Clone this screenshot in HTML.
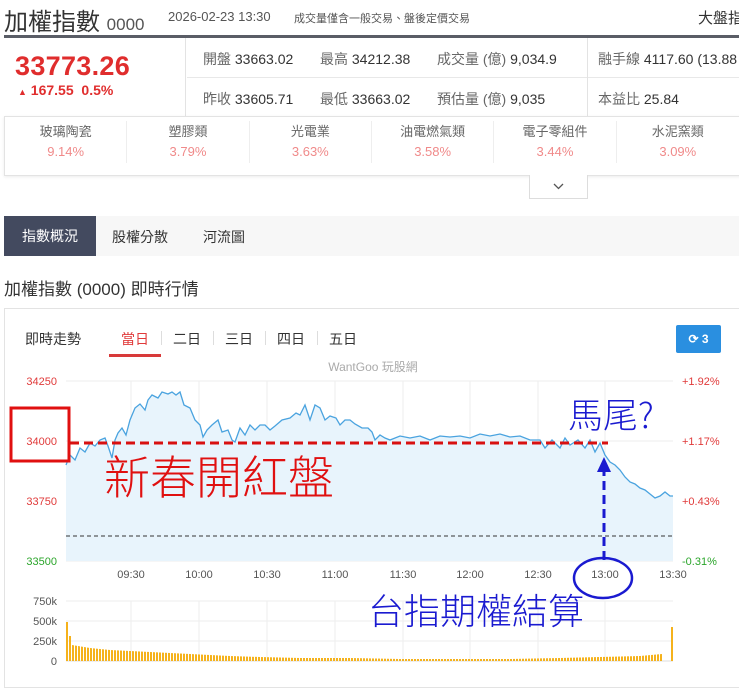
<!DOCTYPE html>
<html><head><meta charset="utf-8"><style>
*{margin:0;padding:0;box-sizing:border-box}
body{width:739px;height:674px;overflow:hidden;background:#fff;font-family:"Liberation Sans","Noto Sans CJK TC",sans-serif;color:#333;position:relative}
.a{position:absolute;white-space:nowrap}
.g{color:#666}
</style></head><body>
<div class="a" style="left:4px;top:2px;font-size:24px;color:#333">加權指數 <span style="font-size:17px;color:#555">0000</span></div>
<div class="a" style="left:168px;top:9px;font-size:13px;color:#555">2026-02-23 13:30</div>
<div class="a" style="left:294px;top:10px;font-size:11px;color:#555">成交量僅含一般交易、盤後定價交易</div>
<div class="a" style="left:698px;top:7px;font-size:15px;color:#333">大盤指</div>
<div class="a" style="left:4px;top:35px;width:735px;height:3px;background:#5a5d66"></div>
<div class="a" style="left:4px;top:38px;width:182px;height:78px;background:#fff;border-right:1px solid #e3e3e3"></div>
<div class="a" style="left:15px;top:51px;font-size:27px;font-weight:bold;color:#e02d2d;letter-spacing:0.3px">33773.26</div>
<div class="a" style="left:18px;top:82px;font-size:14px;color:#e02d2d;font-weight:bold"><span style="font-size:9px">▲</span> 167.55 &nbsp;0.5%</div>
<div class="a" style="left:187px;top:77px;width:552px;height:1px;background:#e8e8e8"></div>
<div class="a" style="left:587px;top:38px;width:1px;height:78px;background:#e3e3e3"></div>
<div class="a" style="left:203px;top:49px;font-size:14px"><span class="g">開盤</span> 33663.02</div>
<div class="a" style="left:320px;top:49px;font-size:14px"><span class="g">最高</span> 34212.38</div>
<div class="a" style="left:437px;top:49px;font-size:14px"><span class="g">成交量 (億)</span> 9,034.9</div>
<div class="a" style="left:598px;top:49px;font-size:14px"><span class="g">融手線</span> 4117.60 (13.88</div>
<div class="a" style="left:203px;top:89px;font-size:14px"><span class="g">昨收</span> 33605.71</div>
<div class="a" style="left:320px;top:89px;font-size:14px"><span class="g">最低</span> 33663.02</div>
<div class="a" style="left:437px;top:89px;font-size:14px"><span class="g">預估量 (億)</span> 9,035</div>
<div class="a" style="left:598px;top:89px;font-size:14px"><span class="g">本益比</span> 25.84</div>
<div class="a" style="left:4px;top:116px;width:740px;height:60px;border:1px solid #e3e3e3;box-shadow:0 1px 3px rgba(0,0,0,.08)"></div>
<div class="a" style="left:5px;top:121px;width:734px;display:flex;font-size:13px;text-align:center">
<div style="width:123px;border-right:1px solid #eee;height:42px"><div class="g">玻璃陶瓷</div><div style="color:#f08a8a;margin-top:4px">9.14%</div></div>
<div style="width:123px;border-right:1px solid #eee"><div class="g">塑膠類</div><div style="color:#f08a8a;margin-top:4px">3.79%</div></div>
<div style="width:123px;border-right:1px solid #eee"><div class="g">光電業</div><div style="color:#f08a8a;margin-top:4px">3.63%</div></div>
<div style="width:123px;border-right:1px solid #eee"><div class="g">油電燃氣類</div><div style="color:#f08a8a;margin-top:4px">3.58%</div></div>
<div style="width:123px;border-right:1px solid #eee"><div class="g">電子零組件</div><div style="color:#f08a8a;margin-top:4px">3.44%</div></div>
<div style="width:123px"><div class="g">水泥窯類</div><div style="color:#f08a8a;margin-top:4px">3.09%</div></div>
</div>
<div class="a" style="left:529px;top:175px;width:59px;height:24px;border:1px solid #ddd;border-top:none;background:#fff"><svg width="57" height="23"><path d="M24 9 L28.5 13.5 L33 9" fill="none" stroke="#555" stroke-width="1.3"/></svg></div>
<div class="a" style="left:4px;top:216px;width:735px;height:40px;background:#f7f7f7"></div>
<div class="a" style="left:4px;top:216px;width:92px;height:40px;background:#434a5f;color:#fff;font-size:14px;line-height:40px;text-align:center">指數概況</div>
<div class="a" style="left:112px;top:227px;font-size:14px">股權分散</div>
<div class="a" style="left:203px;top:227px;font-size:14px">河流圖</div>
<div class="a" style="left:4px;top:275px;font-size:17px;color:#333">加權指數 (0000) 即時行情</div>
<div class="a" style="left:4px;top:308px;width:740px;height:380px;border:1px solid #e3e3e3"></div>
<div class="a" style="left:25px;top:329px;font-size:14px">即時走勢</div>
<div class="a" style="left:121px;top:329px;font-size:14px;color:#e03a3a">當日</div>
<div class="a" style="left:109px;top:354px;width:52px;height:3px;background:#d83a3a"></div>
<div class="a" style="left:173px;top:329px;font-size:14px">二日</div>
<div class="a" style="left:225px;top:329px;font-size:14px">三日</div>
<div class="a" style="left:277px;top:329px;font-size:14px">四日</div>
<div class="a" style="left:329px;top:329px;font-size:14px">五日</div>
<div class="a" style="left:161px;top:331px;width:1px;height:14px;background:#ddd"></div>
<div class="a" style="left:213px;top:331px;width:1px;height:14px;background:#ddd"></div>
<div class="a" style="left:265px;top:331px;width:1px;height:14px;background:#ddd"></div>
<div class="a" style="left:317px;top:331px;width:1px;height:14px;background:#ddd"></div>
<div class="a" style="left:676px;top:325px;width:45px;height:28px;background:#2a8fe0;border-radius:2px;color:#fff;font-size:12px;font-weight:bold;line-height:28px;text-align:center">⟳ 3</div>
<svg class="a" style="left:0;top:355px" width="739" height="319" viewBox="0 355 739 319">
<defs><pattern id="st" width="3" height="10" patternUnits="userSpaceOnUse"><rect width="2" height="10" fill="#f5b21c"/></pattern></defs>
<text x="373" y="371" font-size="12" fill="#aaa" text-anchor="middle" font-family="Liberation Sans,Noto Sans CJK TC,sans-serif">WantGoo 玩股網</text>
<g stroke="#eee" stroke-width="1">
<line x1="66" y1="381" x2="673" y2="381"/><line x1="66" y1="441" x2="673" y2="441"/><line x1="66" y1="501" x2="673" y2="501"/><line x1="66" y1="561" x2="673" y2="561"/>
<line x1="131" y1="381" x2="131" y2="561"/><line x1="199" y1="381" x2="199" y2="561"/><line x1="267" y1="381" x2="267" y2="561"/><line x1="335" y1="381" x2="335" y2="561"/><line x1="403" y1="381" x2="403" y2="561"/><line x1="470" y1="381" x2="470" y2="561"/><line x1="538" y1="381" x2="538" y2="561"/><line x1="605" y1="381" x2="605" y2="561"/>
<line x1="66" y1="601" x2="673" y2="601"/><line x1="66" y1="621" x2="673" y2="621"/><line x1="66" y1="641" x2="673" y2="641"/>
<line x1="131" y1="601" x2="131" y2="661"/><line x1="199" y1="601" x2="199" y2="661"/><line x1="267" y1="601" x2="267" y2="661"/><line x1="335" y1="601" x2="335" y2="661"/><line x1="403" y1="601" x2="403" y2="661"/><line x1="470" y1="601" x2="470" y2="661"/><line x1="538" y1="601" x2="538" y2="661"/><line x1="605" y1="601" x2="605" y2="661"/>
</g>
<path id="ln" d="M66 465 L70 455 75 460 80 448 85 452 90 443 95 446 100 440 105 438 108 446 112 458 115 440 118 433 122 428 126 435 130 420 135 408 140 404 145 410 148 400 152 395 158 398 162 392 168 394 172 392 176 395 180 392 184 405 190 408 195 420 200 425 203 437 207 430 212 425 218 420 222 432 228 430 232 440 235 442 240 428 245 435 250 425 255 430 260 425 265 425 270 430 275 426 282 420 290 418 296 413 300 415 305 405 310 420 315 405 320 408 325 420 330 416 336 418 340 425 345 420 350 420 355 424 362 428 368 428 372 432 375 440 380 435 385 438 390 440 400 436 410 438 420 436 430 440 440 436 450 437 460 436 470 438 480 434 490 436 500 434 510 437 520 436 530 440 540 440 545 448 552 440 560 448 565 438 570 445 578 440 585 448 590 440 595 452 600 443 605 455 610 462 615 465 620 470 625 477 630 482 635 484 640 488 645 490 650 494 655 498 660 496 665 492 670 496 673 496 L673 561 L66 561Z" fill="#e8f4fc" stroke="none"/>
<path d="M66 465 L70 455 75 460 80 448 85 452 90 443 95 446 100 440 105 438 108 446 112 458 115 440 118 433 122 428 126 435 130 420 135 408 140 404 145 410 148 400 152 395 158 398 162 392 168 394 172 392 176 395 180 392 184 405 190 408 195 420 200 425 203 437 207 430 212 425 218 420 222 432 228 430 232 440 235 442 240 428 245 435 250 425 255 430 260 425 265 425 270 430 275 426 282 420 290 418 296 413 300 415 305 405 310 420 315 405 320 408 325 420 330 416 336 418 340 425 345 420 350 420 355 424 362 428 368 428 372 432 375 440 380 435 385 438 390 440 400 436 410 438 420 436 430 440 440 436 450 437 460 436 470 438 480 434 490 436 500 434 510 437 520 436 530 440 540 440 545 448 552 440 560 448 565 438 570 445 578 440 585 448 590 440 595 452 600 443 605 455 610 462 615 465 620 470 625 477 630 482 635 484 640 488 645 490 650 494 655 498 660 496 665 492 670 496 673 496" fill="none" stroke="#4aa3df" stroke-width="1.3"/>
<line x1="66" y1="536" x2="673" y2="536" stroke="#333" stroke-width="1" stroke-dasharray="4,3"/>
<g font-size="11" font-family="Liberation Sans,sans-serif">
<text x="57" y="385" fill="#e03a3a" text-anchor="end">34250</text>
<text x="57" y="445" fill="#e03a3a" text-anchor="end">34000</text>
<text x="57" y="505" fill="#e03a3a" text-anchor="end">33750</text>
<text x="57" y="565" fill="#2aa52a" text-anchor="end">33500</text>
<text x="682" y="385" fill="#e03a3a">+1.92%</text>
<text x="682" y="445" fill="#e03a3a">+1.17%</text>
<text x="682" y="505" fill="#e03a3a">+0.43%</text>
<text x="682" y="565" fill="#2aa52a">-0.31%</text>
<g fill="#555" text-anchor="middle"><text x="131" y="578">09:30</text><text x="199" y="578">10:00</text><text x="267" y="578">10:30</text><text x="335" y="578">11:00</text><text x="403" y="578">11:30</text><text x="470" y="578">12:00</text><text x="538" y="578">12:30</text><text x="605" y="578">13:00</text><text x="673" y="578">13:30</text></g>
<g fill="#555" text-anchor="end"><text x="57" y="605">750k</text><text x="57" y="625">500k</text><text x="57" y="645">250k</text><text x="57" y="665">0</text></g>
</g>
<line x1="66" y1="661" x2="673" y2="661" stroke="#ddd"/>
<rect x="66" y="622" width="2" height="39" fill="#f5b21c"/>
<rect x="69" y="636" width="2" height="25" fill="#f5b21c"/>
<path d="M72 661 L72 645 90 648 110 650 130 651 150 652 170 653 190 654 210 655 230 656 260 657 300 658 350 658 400 659 460 659 510 659 560 658 600 657 640 656 662 654 662 661Z" fill="url(#st)"/>
<rect x="671" y="627" width="2" height="34" fill="#f5b21c"/>
<rect x="11" y="408" width="58" height="53" fill="none" stroke="#e01010" stroke-width="3"/>
<line x1="70" y1="443" x2="608" y2="443" stroke="#d81010" stroke-width="3" stroke-dasharray="9,5"/>
<text x="104" y="494" font-size="46" fill="#e01010" font-family="Noto Sans CJK TC,sans-serif" font-weight="300">新春開紅盤</text>
<text x="568" y="428" font-size="35" fill="#1a1ad0" font-family="Noto Sans CJK TC,sans-serif" font-weight="300">馬尾?</text>
<line x1="604" y1="560" x2="604" y2="470" stroke="#1a1ad0" stroke-width="3" stroke-dasharray="9,5"/>
<polygon points="597,472 611,472 604,457" fill="#1a1ad0"/>
<ellipse cx="603" cy="578" rx="29" ry="20" fill="none" stroke="#1a1ad0" stroke-width="2.5"/>
<text x="368" y="624" font-size="36" fill="#1a1ad0" font-family="Noto Sans CJK TC,sans-serif" font-weight="300">台指期權結算</text>
</svg>
</body></html>
